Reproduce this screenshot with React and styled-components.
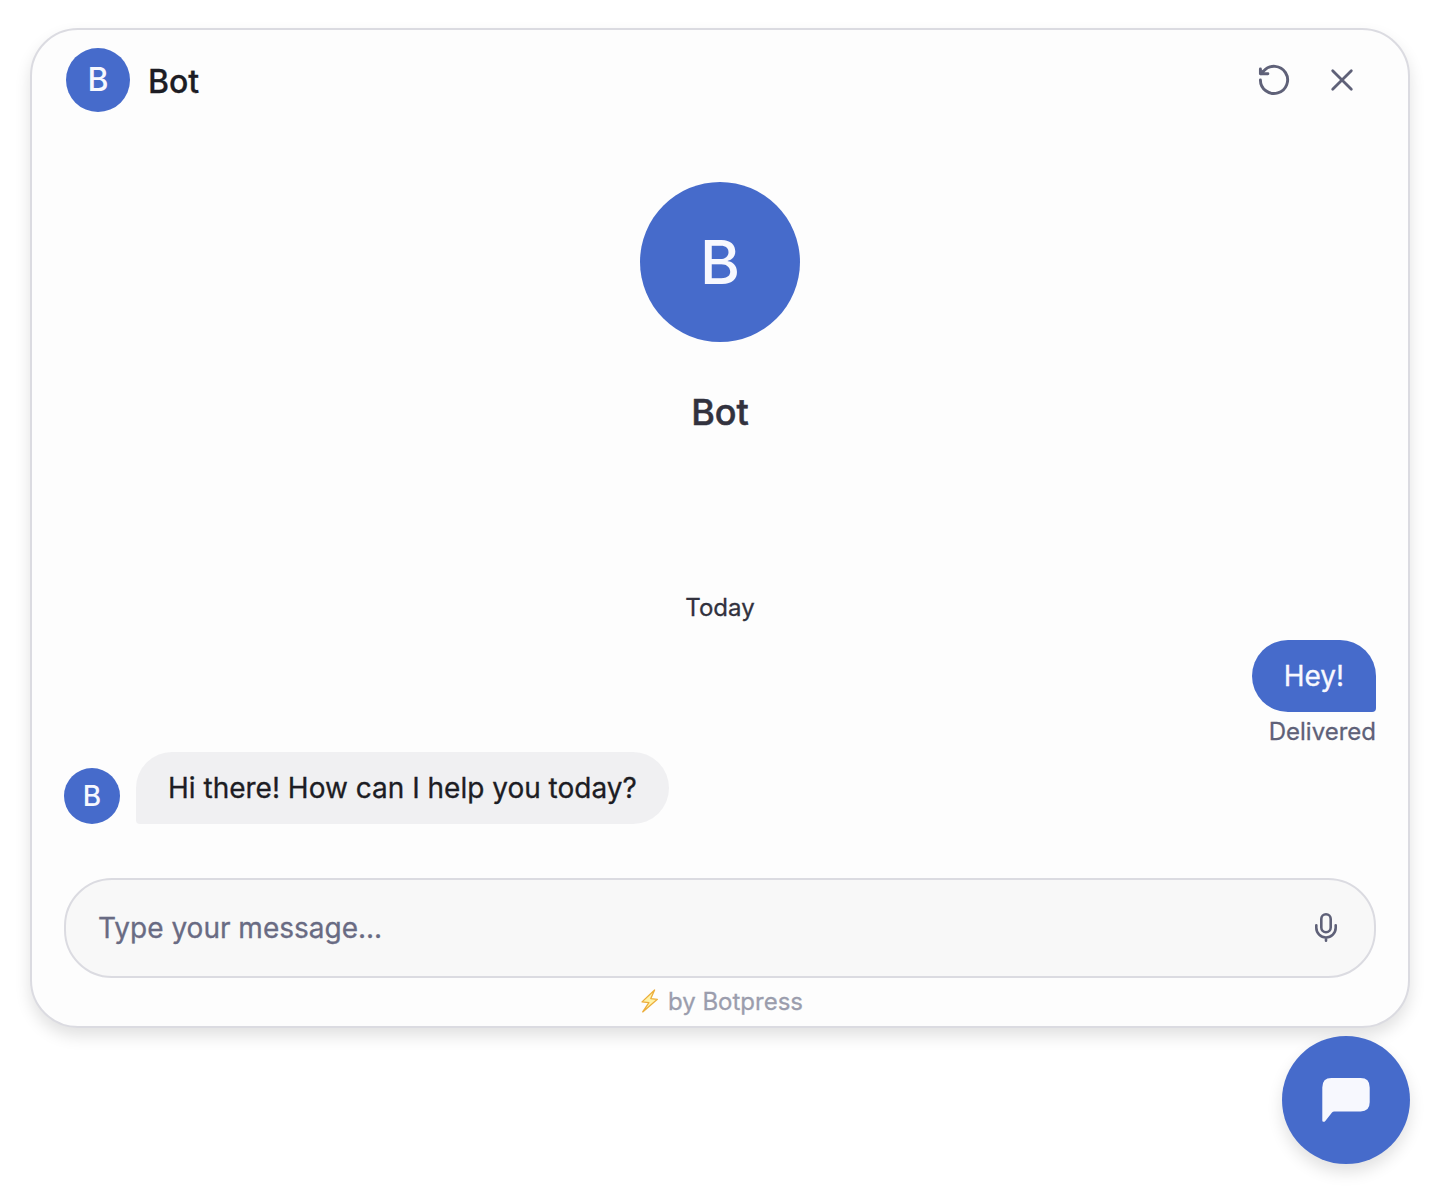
import React from "react";
import styled, { createGlobalStyle } from "styled-components";

const blue = "#466bcb";
const slate = "#5f6178";

const GlobalStyle = createGlobalStyle`
  *, *::before, *::after { box-sizing: border-box; }
  body {
    margin: 0;
    background: #fff;
    font-family: Inter, "Liberation Sans", sans-serif;
    -webkit-font-smoothing: antialiased;
    -webkit-text-stroke: 0.3px currentColor;
  }
`;

const Page = styled.main`
  display: flex;
  flex-direction: column;
  align-items: stretch;
  gap: 8px;
  height: 1202px;
  padding: 28px 30px;
  overflow: hidden;
`;

const Panel = styled.section`
  display: flex;
  flex-direction: column;
  height: 1000px;
  flex: none;
  border: 2px solid #dbdbe1;
  border-radius: 48px;
  background: #fdfdfd;
  box-shadow: 0 8px 16px rgba(0, 0, 0, 0.12);
`;

const Header = styled.header`
  display: flex;
  align-items: center;
  height: 100px;
  padding: 0 46px 0 34px;
`;

const Avatar = styled.div`
  display: flex;
  align-items: center;
  justify-content: center;
  flex: none;
  width: ${(p) => p.$size}px;
  height: ${(p) => p.$size}px;
  border-radius: 50%;
  background: ${blue};
  color: #f7f8fe;
  font-size: ${(p) => p.$font}px;
  font-weight: 500;
  line-height: 1;
  -webkit-text-stroke: 0;
`;

const Title = styled.h1`
  flex: 1;
  margin: 3px 0 0 18px;
  color: #1d1d24;
  font-size: 32px;
  line-height: 40px;
  font-weight: 500;
`;

const Actions = styled.div`
  display: flex;
  gap: 28px;
`;

const IconButton = styled.button`
  display: flex;
  align-items: center;
  justify-content: center;
  width: 40px;
  height: 40px;
  padding: 0;
  border: 0;
  background: none;
  color: ${slate};
`;

const Icon = styled.svg`
  display: block;
  overflow: visible;
  fill: none;
  stroke: currentColor;
  stroke-linecap: round;
  stroke-linejoin: round;
`;

const Conversation = styled.div`
  display: flex;
  flex-direction: column;
  flex: 1;
  padding: 52px 32px 0;
`;

const Intro = styled.div`
  display: flex;
  flex-direction: column;
  align-items: center;
  gap: 46px;
  height: 406px;
`;

const BotName = styled.h2`
  margin: 0;
  color: #32323e;
  font-size: 36px;
  line-height: 48px;
  font-weight: 500;
  -webkit-text-stroke: 0.5px currentColor;
`;

const DayLabel = styled.div`
  height: 52px;
  color: #32323e;
  font-size: 24px;
  line-height: 40px;
  text-align: center;
`;

const MessageRow = styled.div`
  display: flex;
  flex-direction: ${(p) => (p.$outgoing ? "column" : "row")};
  align-items: flex-end;
  gap: ${(p) => (p.$outgoing ? 0 : 16)}px;
`;

const Bubble = styled.div`
  padding: 16px 32px;
  border-radius: ${(p) => (p.$outgoing ? "36px 36px 4px 36px" : "36px 36px 36px 4px")};
  background: ${(p) => (p.$outgoing ? blue : "#f0f0f2")};
  color: ${(p) => (p.$outgoing ? "#f7f8fe" : "#1d1d24")};
  font-size: 28px;
  line-height: 40px;
  white-space: nowrap;
`;

const Status = styled.div`
  height: 40px;
  color: ${slate};
  font-size: 24px;
  line-height: 40px;
`;

const Footer = styled.footer`
  display: flex;
  flex-direction: column;
  height: 148px;
  padding: 0 32px;
`;

const Composer = styled.div`
  display: flex;
  align-items: center;
  justify-content: space-between;
  height: 100px;
  padding: 0 28px 0 32px;
  border: 2px solid #dbdbe1;
  border-radius: 48px;
  background: #f8f8f8;
`;

const Placeholder = styled.span`
  color: #696b83;
  font-size: 28px;
  line-height: 40px;
`;

const Credit = styled.div`
  display: flex;
  align-items: center;
  justify-content: center;
  gap: 9px;
  height: 48px;
  padding-left: 3px;
  color: #9b9dad;
  font-size: 24px;
  line-height: 40px;
`;

const Bolt = styled(Icon)`
  margin-top: -2px;
  fill: #fff3a8;
  stroke: #ecae3c;
`;

const Launcher = styled.button`
  display: flex;
  align-items: center;
  justify-content: center;
  align-self: flex-end;
  flex: none;
  width: 128px;
  height: 128px;
  padding: 0;
  border: 0;
  border-radius: 50%;
  background: ${blue};
  color: #f7f8fe;
  box-shadow: 0 8px 16px rgba(0, 0, 0, 0.12);
`;

export default function App() {
  return (
    <>
      <GlobalStyle />
      <Page>
        <Panel>
          <Header>
            <Avatar $size={64} $font={32}>B</Avatar>
            <Title>Bot</Title>
            <Actions>
              <IconButton aria-label="Restart conversation">
                <Icon width="40" height="40" viewBox="0 0 40 40" strokeWidth="2.9">
                  <path d="M6.4 19.9a13.6 13.6 0 1 0 3.4-9L7 13.6" />
                  <path d="M6.4 8.9v4.9h7.5" />
                  <path d="M6.4 9.4 9.8 11.8" strokeWidth="1" />
                </Icon>
              </IconButton>
              <IconButton aria-label="Close">
                <Icon width="40" height="40" viewBox="0 0 40 40" strokeWidth="2.8">
                  <path d="m10.7 10.7 18.6 18.6M29.3 10.7 10.7 29.3" />
                </Icon>
              </IconButton>
            </Actions>
          </Header>
          <Conversation>
            <Intro>
              <Avatar $size={160} $font={61}>B</Avatar>
              <BotName>Bot</BotName>
            </Intro>
            <DayLabel>Today</DayLabel>
            <MessageRow $outgoing>
              <Bubble $outgoing>Hey!</Bubble>
              <Status>Delivered</Status>
            </MessageRow>
            <MessageRow>
              <Avatar $size={56} $font={28}>B</Avatar>
              <Bubble>Hi there! How can I help you today?</Bubble>
            </MessageRow>
          </Conversation>
          <Footer>
            <Composer>
              <Placeholder>Type your message...</Placeholder>
              <IconButton aria-label="Record voice message">
                <Icon width="40" height="40" viewBox="0 0 40 40" strokeWidth="2.6">
                  <rect x="15.3" y="6.3" width="9.4" height="17.9" rx="4.7" />
                  <path d="M10.3 17.2v2.6a9.7 9.7 0 0 0 19.4 0v-2.6M20 29.8v3" />
                </Icon>
              </IconButton>
            </Composer>
            <Credit>
              <Bolt width="19" height="24" viewBox="0 0 19 24" strokeWidth="1.3">
                <path d="M14.6 1 2 12.9l6.9.8L2.7 22.9 17.4 10.3l-6.6-.7Z" />
              </Bolt>
              <span>by Botpress</span>
            </Credit>
          </Footer>
        </Panel>
        <Launcher aria-label="Open chat">
          <svg width="48" height="48" viewBox="0 0 48 48" fill="currentColor">
            <path d="M0.3 44.4V11.4Q0.3 2 9.4 2H38.6Q47.7 2 47.7 11.4V26.2Q47.7 35.4 38.6 35.4H12.2Q10.9 35.4 10 36.5L3.3 44.9Q2.4 46 1.4 45.8Q0.3 45.6 0.3 44.4Z" />
          </svg>
        </Launcher>
      </Page>
    </>
  );
}
